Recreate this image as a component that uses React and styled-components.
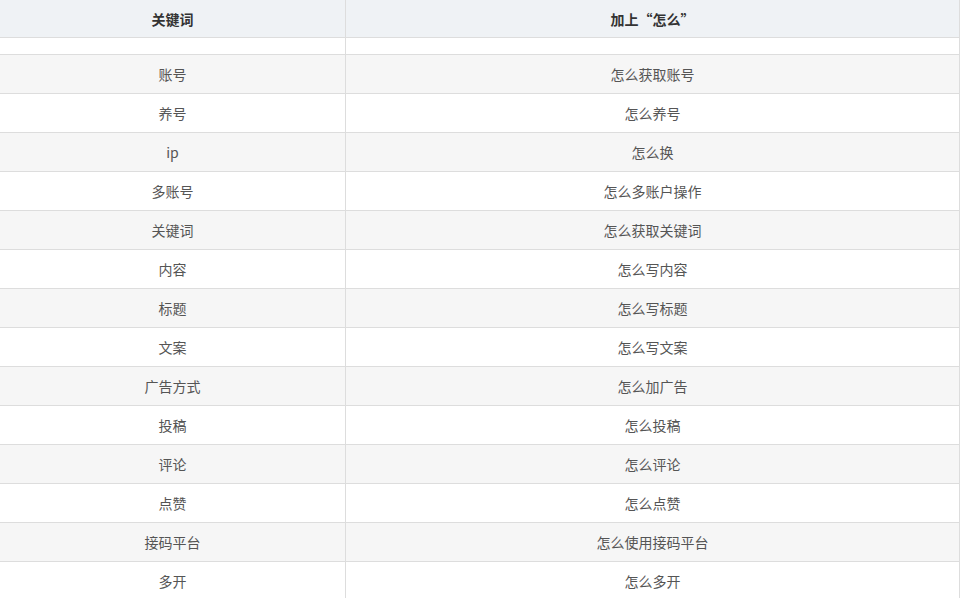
import React from 'react';
import styled, { createGlobalStyle } from 'styled-components';

const GlobalStyle = createGlobalStyle`
    body {
        margin: 0;
        background: #fff;
        font-family: "Microsoft YaHei", "Noto Sans CJK SC", "Noto Sans", sans-serif;
    }
`;

const Table = styled.div`
    width: 960px;
    box-sizing: border-box;
    border-right: 1px solid #ddd;
    font-size: 14px;
`;

const Row = styled.div`
    display: grid;
    grid-template-columns: 346px 1fr;
    box-sizing: border-box;
    height: ${props => props.h}px;
    border-bottom: 1px solid #ddd;
    background-color: ${props => props.bg};
`;

const Cell = styled.div`
    display: flex;
    align-items: center;
    justify-content: center;
    color: ${props => (props.head ? '#333' : '#555')};
    font-weight: ${props => (props.head ? 'bold' : 'normal')};
    line-height: 1;
    &:first-child {
        border-right: 1px solid #ddd;
    }
`;

const rows = [
    ['账号', '怎么获取账号'],
    ['养号', '怎么养号'],
    ['ip', '怎么换'],
    ['多账号', '怎么多账户操作'],
    ['关键词', '怎么获取关键词'],
    ['内容', '怎么写内容'],
    ['标题', '怎么写标题'],
    ['文案', '怎么写文案'],
    ['广告方式', '怎么加广告'],
    ['投稿', '怎么投稿'],
    ['评论', '怎么评论'],
    ['点赞', '怎么点赞'],
    ['接码平台', '怎么使用接码平台'],
    ['多开', '怎么多开'],
];

function App() {
    return (
        <>
            <GlobalStyle />
            <Table>
                <Row h={38} bg="#eff2f5">
                    <Cell head>关键词</Cell>
                    <Cell head>加上“怎么”</Cell>
                </Row>
                <Row h={17} bg="#fff">
                    <Cell />
                    <Cell />
                </Row>
                {rows.map(([key, how], index) => (
                    <Row key={key} h={39} bg={index % 2 === 0 ? '#f6f6f6' : '#fff'}>
                        <Cell>{key}</Cell>
                        <Cell>{how}</Cell>
                    </Row>
                ))}
            </Table>
        </>
    );
}

export default App;
